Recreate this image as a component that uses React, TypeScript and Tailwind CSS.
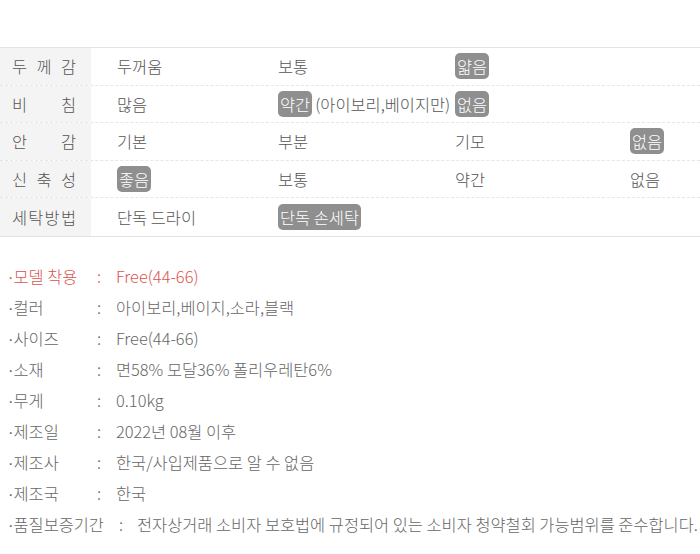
import type { ReactNode } from 'react';

const font = { fontFamily: '"Noto Sans CJK KR", "Noto Sans", sans-serif' };

function Badge({ children }: { children: ReactNode }) {
  return <span className="rounded-[5px] bg-[#8f8f8f] px-[2px] py-px text-white">{children}</span>;
}

function Dot() {
  return <span className="leading-none" style={{ fontFamily: '"Liberation Sans", sans-serif' }}>·</span>;
}

function Label({ chars }: { chars: string[] }) {
  return (
    <div className="flex w-[91px] shrink-0 items-center self-stretch bg-[#f4f4f4] pl-[12px]">
      <div className="flex w-[64px] justify-between">
        {chars.map((c, i) => (
          <span key={i}>{c}</span>
        ))}
      </div>
    </div>
  );
}

type Row = { label: string[]; cells: ReactNode[] };

const rows: Row[] = [
  { label: ['두', '께', '감'], cells: ['두꺼움', '보통', <Badge>얇음</Badge>, ''] },
  {
    label: ['비', '침'],
    cells: [
      '많음',
      <span>
        <Badge>약간</Badge>
        <span className="ml-[3px]">(아이보리,베이지만)</span>
      </span>,
      <Badge>없음</Badge>,
      '',
    ],
  },
  { label: ['안', '감'], cells: ['기본', '부분', '기모', <Badge>없음</Badge>] },
  { label: ['신', '축', '성'], cells: [<Badge>좋음</Badge>, '보통', '약간', '없음'] },
  { label: ['세', '탁', '방', '법'], cells: ['단독 드라이', <Badge>단독 손세탁</Badge>, '', ''] },
];

const specs = [
  { k: '모델 착용', v: 'Free(44-66)', red: true },
  { k: '컬러', v: '아이보리,베이지,소라,블랙' },
  { k: '사이즈', v: 'Free(44-66)' },
  { k: '소재', v: '면58% 모달36% 폴리우레탄6%' },
  { k: '무게', v: '0.10kg' },
  { k: '제조일', v: '2022년 08월 이후' },
  { k: '제조사', v: '한국/사입제품으로 알 수 없음' },
  { k: '제조국', v: '한국' },
];

export default function App() {
  return (
    <div className="h-[554px] w-[700px] overflow-hidden bg-white text-[16.4px] font-light" style={font}>
      <div className="h-[47px]" />

      {/* fabric chart */}
      <div className="border-y border-[#e3e3e3] text-[#555]">
        {rows.map((row, i) => (
          <div
            key={i}
            className={
              'flex h-[37.6px] items-center ' +
              (i < rows.length - 1 ? 'border-b border-dashed border-[#e6e6e6]' : '')
            }
          >
            <Label chars={row.label} />
            <div className="w-[187px] shrink-0 whitespace-nowrap pl-[26px]">{row.cells[0]}</div>
            <div className="w-[177px] shrink-0 whitespace-nowrap">{row.cells[1]}</div>
            <div className="w-[175px] shrink-0 whitespace-nowrap">{row.cells[2]}</div>
            <div className="flex-1 whitespace-nowrap">{row.cells[3]}</div>
          </div>
        ))}
      </div>

      {/* product info */}
      <div className="mt-[24px] pl-[8px] text-[#666]">
        {specs.map((s) => (
          <div
            key={s.k}
            className={'flex h-[31px] items-center whitespace-nowrap ' + (s.red ? 'text-[#d9534f]' : '')}
          >
            <span className="w-[89px]">
              <Dot />
              {s.k}
            </span>
            <span className="w-[19px]">:</span>
            <span>{s.v}</span>
          </div>
        ))}
        <div className="flex h-[31px] items-center whitespace-nowrap">
          <span className="w-[111px]">
            <Dot />
            품질보증기간
          </span>
          <span className="w-[18px]">:</span>
          <span>전자상거래 소비자 보호법에 규정되어 있는 소비자 청약철회 가능범위를 준수합니다.</span>
        </div>
      </div>
    </div>
  );
}
